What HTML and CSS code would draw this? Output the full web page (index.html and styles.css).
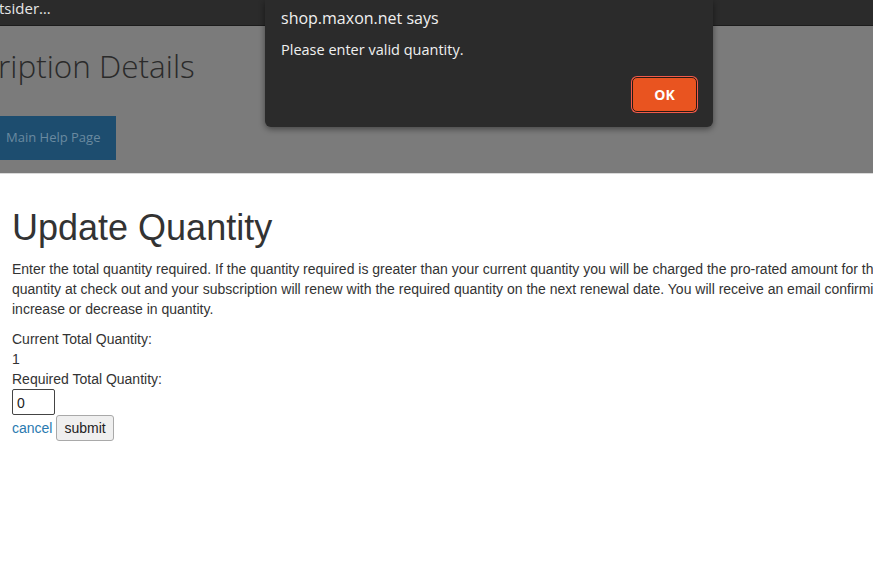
FILE: index.html
```html
<!DOCTYPE html>
<html>
<head>
<meta charset="utf-8">
<link rel="stylesheet" href="styles.css">
</head>
<body>
<div class="topbar"><span class="topbar-text">tsider…</span></div>
<div class="dimmed">
  <h2 class="sub-title">ription Details</h2>
  <a class="help-btn">Main Help Page</a>
</div>
<div class="content">
  <h1 class="page-title">Update Quantity</h1>
  <p class="intro">Enter the total quantity required. If the quantity required is greater than your current quantity you will be charged the pro-rated amount for the additional quantity at check out and your subscription will renew with the required quantity on the next renewal date. You will receive an email confirming the increase or decrease in quantity.</p>
  <div class="field-label">Current Total Quantity:</div>
  <div class="field-value">1</div>
  <div class="field-label">Required Total Quantity:</div>
  <div class="input-row"><input class="qty" type="text" value="0"></div>
  <div class="actions"><a class="cancel" href="#">cancel</a> <button class="submit">submit</button></div>
</div>
<div class="dialog">
  <div class="dialog-title">shop.maxon.net says</div>
  <div class="dialog-msg">Please enter valid quantity.</div>
  <div class="dialog-actions"><button class="ok">OK</button></div>
</div>
</body>
</html>
```
FILE: styles.css
```css
html, body {
  margin: 0;
  padding: 0;
  overflow: hidden;
  background: #ffffff;
}
body {
  width: 873px;
  height: 573px;
  position: relative;
  font-family: "Liberation Sans", Arial, sans-serif;
}
.topbar {
  height: 25px;
  background: #2b2b2b;
  border-bottom: 1px solid #1c1c1c;
  display: flex;
  align-items: center;
  overflow: hidden;
}
.topbar-text {
  font-family: "Open Sans", sans-serif;
  font-size: 15px;
  color: #e6e6e6;
  margin-left: -1px;
  margin-top: -9px;
  white-space: nowrap;
}
.dimmed {
  height: 147px;
  background: #7b7b7b;
  border-bottom: 1px solid #d9d9d9;
  padding-top: 0;
  overflow: hidden;
}
.sub-title {
  margin: 0;
  padding-top: 20px;
  font-family: "Open Sans", sans-serif;
  font-weight: 300;
  font-size: 31.5px;
  line-height: 40px;
  color: #2a2a2a;
  margin-left: -2px;
  white-space: nowrap;
}
.help-btn {
  display: flex;
  align-items: center;
  width: 110px;
  height: 42px;
  margin-top: 30px;
  padding-left: 6px;
  background: #1d4d6f;
  color: #6a8aa0;
  font-family: "Open Sans", sans-serif;
  font-size: 13px;
  padding-bottom: 2px;
  box-sizing: content-box;
}
.content {
  width: 952px;
  padding: 0 12px;
  color: #333333;
  font-size: 14px;
  line-height: 20px;
}
.page-title {
  margin: 0;
  padding-top: 31px;
  font-size: 36px;
  font-weight: 400;
  line-height: 46px;
  color: #333333;
}
.intro {
  margin: 8px 0 10px 0;
}
.input-row {
  height: 26px;
}
.qty {
  box-sizing: border-box;
  width: 43px;
  height: 26px;
  margin: 0;
  padding: 1px 4px 0 4px;
  border: 1px solid #444444;
  border-radius: 2px;
  font-family: "Liberation Sans", Arial, sans-serif;
  font-size: 14px;
  color: #222222;
  background: #ffffff;
}
.actions {
  display: flex;
  align-items: center;
  gap: 4px;
  height: 26px;
}
.cancel {
  color: #2a7ab0;
  text-decoration: none;
}
.submit {
  box-sizing: border-box;
  height: 26px;
  padding: 0 7px;
  margin: 0;
  border: 1px solid #a9a9a9;
  border-radius: 3px;
  background: #efefef;
  font-family: "Liberation Sans", Arial, sans-serif;
  font-size: 14px;
  color: #222222;
}
.dialog {
  position: absolute;
  left: 265px;
  top: 0;
  width: 448px;
  height: 127px;
  box-sizing: border-box;
  background: #2b2b2b;
  border-radius: 0 0 6px 6px;
  box-shadow: 0 2px 6px rgba(0,0,0,0.45);
  padding: 6px 16px 0 16px;
  font-family: "Open Sans", sans-serif;
  color: #f0f0f0;
}
.dialog-title {
  font-size: 16px;
  line-height: 24px;
}
.dialog-msg {
  font-size: 14.5px;
  line-height: 20px;
  margin-top: 10px;
}
.dialog-actions {
  display: flex;
  justify-content: flex-end;
  margin-top: 17px;
}
.ok {
  box-sizing: border-box;
  width: 65px;
  height: 35px;
  background: #e95420;
  border: 1px solid #2a1a14;
  border-radius: 5px;
  box-shadow: 0 0 0 1px #f25a4a;
  color: #ffffff;
  font-family: "Open Sans", sans-serif;
  font-weight: 700;
  font-size: 14px;
}
```
